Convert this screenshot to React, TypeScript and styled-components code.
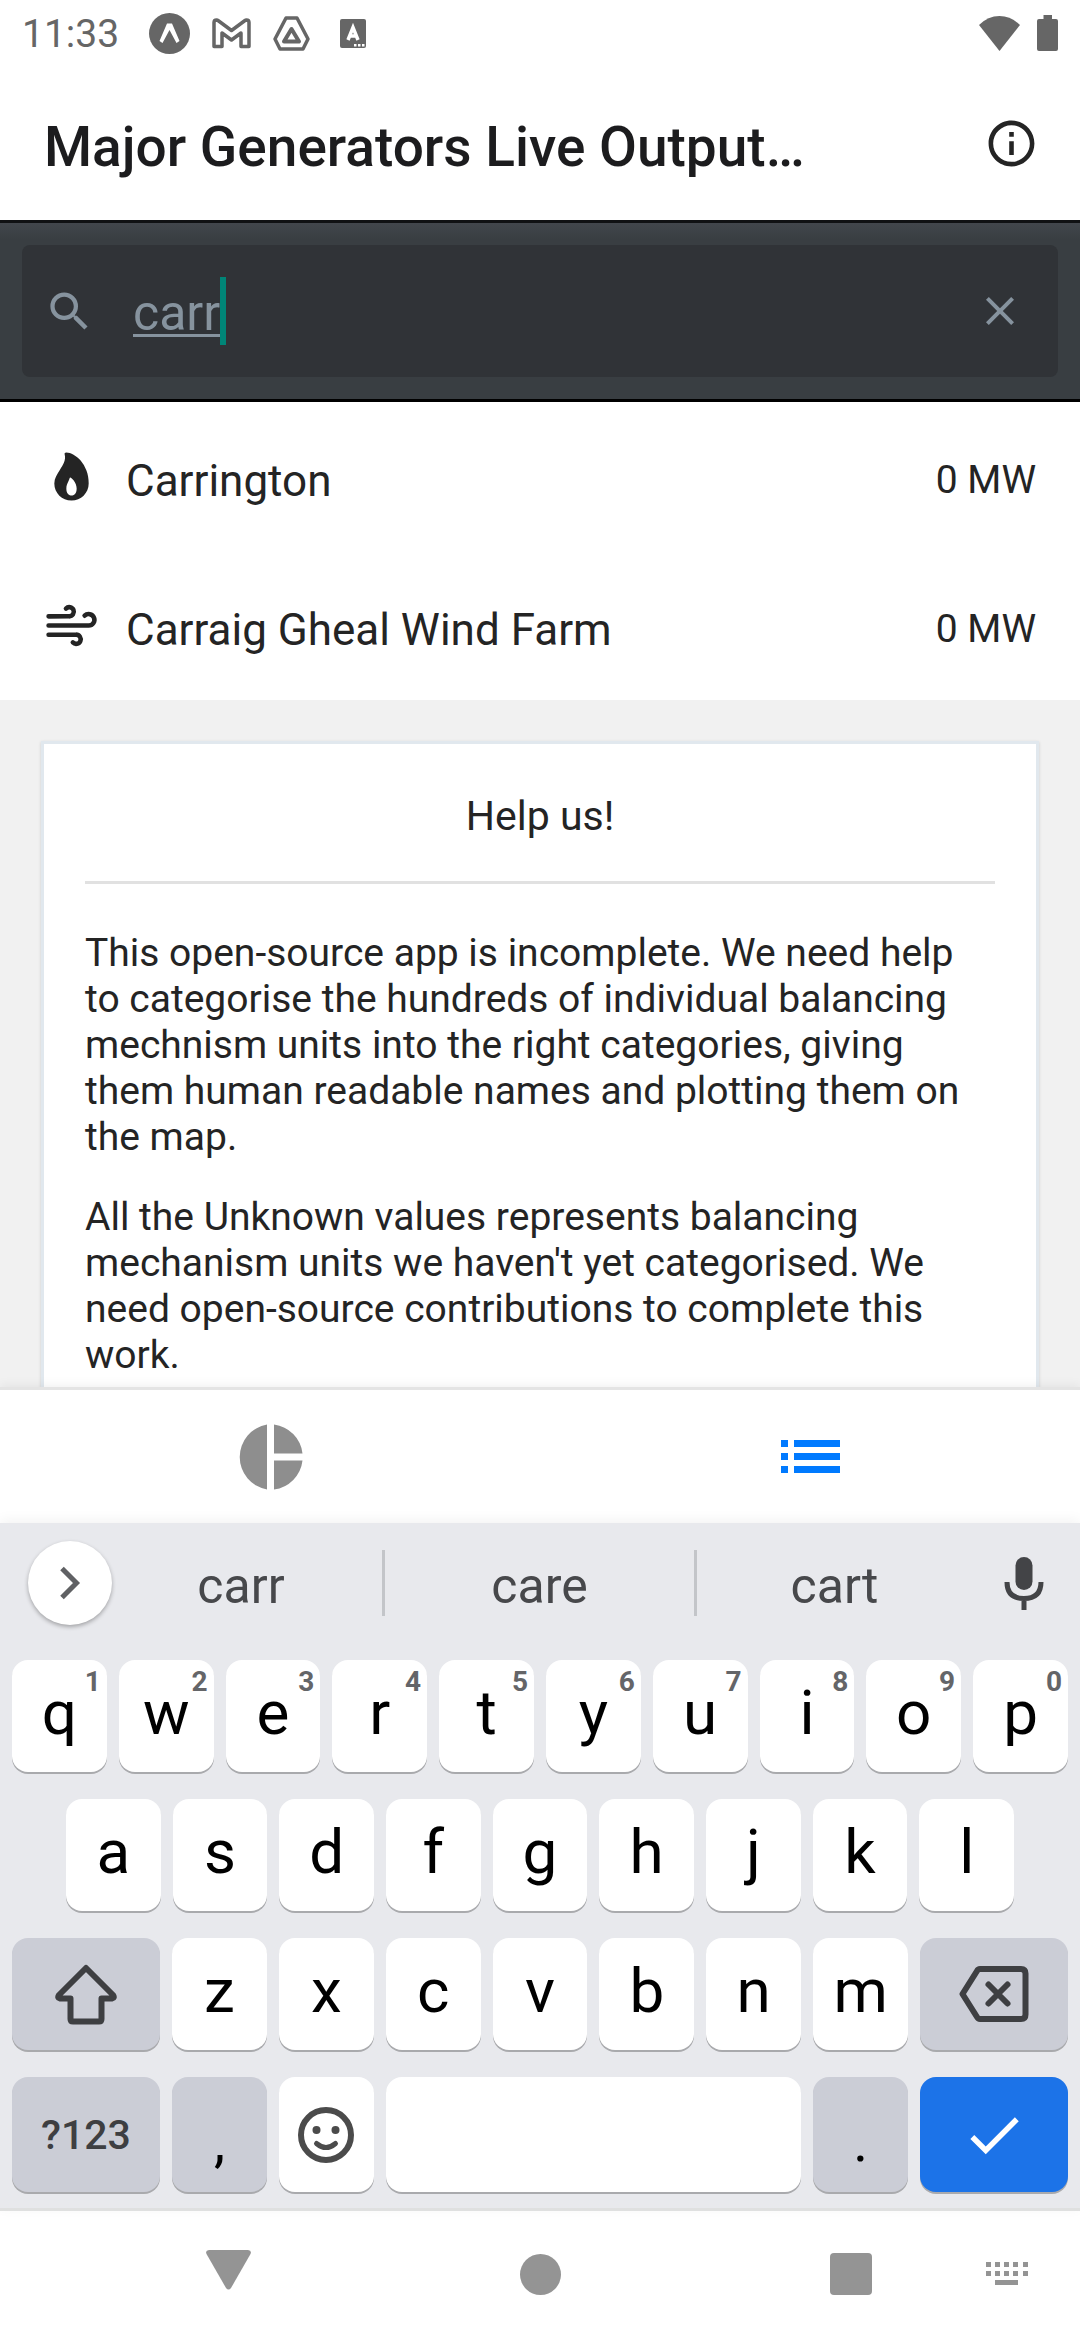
import React, { useState } from 'react';
import styled, { createGlobalStyle } from 'styled-components';
import { FiWind } from 'react-icons/fi';
import { IoFlame } from 'react-icons/io5';
import { MdInfoOutline, MdSearch, MdClose, MdCheck } from 'react-icons/md';

const GlobalStyle = createGlobalStyle`
  * { box-sizing: border-box; }
  body { margin: 0; background: #fff; }
  body, button, input { font-family: Roboto, "Noto Sans", sans-serif; }
  button { margin: 0; padding: 0; border: 0; background: none; color: inherit; }
  h1, h2, p, ul { margin: 0; padding: 0; font-weight: 400; }
  svg { display: block; flex: none; }
`;

const Screen = styled.div`
  display: flex;
  flex-direction: column;
  height: 100vh;
  overflow: hidden;
  color: #242424;
`;

const StatusBar = styled.div`
  display: flex;
  align-items: center;
  justify-content: space-between;
  flex: none;
  height: 66px;
  padding: 0 22px;
  color: #666;
`;

const StatusGroup = styled.div<{ $gap: number }>`
  display: flex;
  align-items: center;
  gap: ${(p) => p.$gap}px;
`;

const Clock = styled.span`
  margin-right: 8px;
  padding-top: 2px;
  font-size: 39px;
  line-height: 46px;
`;

const Header = styled.header`
  display: flex;
  align-items: center;
  justify-content: space-between;
  flex: none;
  height: 154px;
  padding: 0 41px 0 44px;
`;

const Title = styled.h1`
  padding-top: 8px;
  white-space: nowrap;
  font-size: 55px;
  line-height: 64px;
  font-weight: 500;
  color: #1c1c1e;
`;

const SearchBar = styled.div`
  flex: none;
  padding: 22px;
  border-top: 3px solid #101113;
  border-bottom: 3px solid #000;
  background: linear-gradient(#42464c, #393e42 16px);
`;

const SearchField = styled.label`
  display: flex;
  align-items: center;
  height: 132px;
  padding: 0 34px 0 22px;
  border-radius: 8px;
  background: #303337;
  color: #86939e;
`;

const SearchInput = styled.input`
  field-sizing: content;
  margin-left: 38px;
  padding: 4px 0 0;
  border: 0;
  outline: 0;
  background: transparent;
  color: #86939e;
  font-size: 50px;
  line-height: 68px;
  text-decoration: underline;
  text-decoration-thickness: 3px;
  text-underline-offset: 4px;
`;

const Caret = styled.span`
  width: 6px;
  height: 68px;
  background: #008577;
`;

const ClearButton = styled.button`
  margin-left: auto;
`;

const Results = styled.ul`
  flex: none;
  list-style: none;
`;

const ResultRow = styled.li`
  display: flex;
  align-items: center;
  height: 149px;
  padding: 0 44px;
`;

const ResultName = styled.span`
  flex: 1;
  padding: 8px 0 0 27px;
  font-size: 44px;
  line-height: 52px;
`;

const ResultValue = styled.span`
  padding-top: 6px;
  font-size: 39px;
  line-height: 46px;
`;

const Content = styled.main`
  flex: 1;
  min-height: 0;
  overflow: hidden;
  padding: 41px 41px 0;
  background: #f1f1f1;
`;

const Card = styled.section`
  min-height: 100%;
  padding: 41px;
  border: 3px solid #e1e8ee;
  background: #fff;
  box-shadow: 0 1px 3px rgba(0, 0, 0, 0.15);
`;

const CardTitle = styled.h2`
  padding: 8px 0 42px;
  border-bottom: 3px solid #e1e1e1;
  margin-bottom: 46px;
  text-align: center;
  font-size: 41px;
  line-height: 46px;
`;

const Paragraph = styled.p`
  margin-bottom: 34px;
  font-size: 39px;
  line-height: 46px;
`;

const TabBar = styled.nav`
  position: relative;
  display: grid;
  grid-template-columns: 1fr 1fr;
  flex: none;
  height: 136px;
  border-top: 3px solid #e4e4e4;
  background: #fff;
  box-shadow: 0 -2px 10px rgba(0, 0, 0, 0.06);
`;

const Tab = styled.button<{ $active?: boolean }>`
  display: flex;
  align-items: center;
  justify-content: center;
  color: ${(p) => (p.$active ? '#007aff' : '#8e8e8e')};
`;

const Keyboard = styled.div`
  position: relative;
  flex: none;
  padding-bottom: 16px;
  border-bottom: 3px solid #dfe0e0;
  background: #e8e9ed;
  box-shadow: 0 -3px 12px rgba(0, 0, 0, 0.05);
`;

const Suggestions = styled.div`
  display: grid;
  grid-template-columns: 72px 282fr 312fr 278fr 72px;
  align-items: center;
  height: 120px;
  margin-bottom: 17px;
  padding: 0 36px 0 28px;
`;

const ExpandButton = styled.button`
  display: flex;
  align-items: center;
  justify-content: center;
  width: 84px;
  height: 84px;
  border-radius: 50%;
  background: #fff;
  color: #606164;
  box-shadow: 0 2px 4px rgba(0, 0, 0, 0.3);
`;

const Suggestion = styled.button`
  height: 66px;
  padding-top: 5px;
  font-size: 50px;
  line-height: 58px;
  color: #47484b;

  & + & {
    border-left: 3px solid #c3c5c9;
  }
`;

const MicButton = styled.button`
  display: flex;
  justify-content: flex-end;
  color: #434447;
`;

const KeyRows = styled.div`
  display: flex;
  flex-direction: column;
  gap: 27px;
`;

const KeyRow = styled.div<{ $inset?: boolean }>`
  display: flex;
  gap: 12px;
  padding: 0 ${(p) => (p.$inset ? 66 : 12)}px;
`;

const tones = {
  light: ['#fff', '#000'],
  grey: ['#cbcdd6', '#3e3f42'],
  blue: ['#1c73e8', '#fff'],
};

const Key = styled.button<{
  $tone?: keyof typeof tones;
  $wide?: boolean;
  $space?: boolean;
  $tall?: boolean;
}>`
  position: relative;
  display: flex;
  align-items: center;
  justify-content: center;
  flex: ${(p) => (p.$wide ? '0 0 148px' : p.$space ? '416 1 0' : '95 1 0')};
  height: ${(p) => (p.$tall ? 115 : 112)}px;
  border-radius: 16px;
  background: ${(p) => tones[p.$tone ?? 'light'][0]};
  color: ${(p) => tones[p.$tone ?? 'light'][1]};
  box-shadow: 0 2px 0 #a9aaad;
`;

const Letter = styled.span`
  padding-bottom: 6px;
  font-size: 62px;
  line-height: 72px;
`;

const Punctuation = styled.span`
  padding-top: 14px;
  font-size: 56px;
  line-height: 66px;
  color: #000;
`;

const KeyLabel = styled.span`
  font-size: 41px;
  line-height: 48px;
  font-weight: 500;
`;

const Hint = styled.span`
  position: absolute;
  top: 6px;
  right: 6px;
  font-size: 28px;
  line-height: 32px;
  font-weight: 700;
  color: #646568;
`;

const SystemNav = styled.nav`
  display: grid;
  grid-template-columns: 145fr 167fr 456fr 166fr 146fr;
  align-items: center;
  flex: none;
  height: 129px;
  padding-bottom: 3px;
  color: #949494;
  background: #fff;
`;

const NavButton = styled.button<{ $first?: boolean }>`
  display: flex;
  justify-content: center;
  grid-column: ${(p) => (p.$first ? 2 : 'auto')};
`;

const ExpoIcon = () => (
  <svg width="41" height="41" viewBox="0 0 41 41">
    <circle cx="20.5" cy="20.5" r="20.5" fill="currentColor" />
    <path d="M18 10.500h5l7.500 17.500-3 2-7-13-7 13-3-2z" fill="#fff" />
  </svg>
);

const MailIcon = () => (
  <svg width="39" height="31" viewBox="0 0 39 31" fill="none" stroke="currentColor" strokeWidth="3.5" strokeLinejoin="round">
    <path d="M2 28.500V4.500Q2 2 4.500 2L6 2.500 19.500 12.500 33 2.500 34.500 2Q37 2 37 4.500V28.500H29V15L19.500 22 10 15V28.500Z" />
  </svg>
);

const DriveIcon = () => (
  <svg width="37" height="35" viewBox="0 0 37 35" fill="none" stroke="currentColor" strokeWidth="3.5" strokeLinejoin="round">
    <path d="M13 2H24L35 23 30 33H7L2 23Z" />
    <path d="M18.500 13L26 25.500H11Z" strokeWidth="4" />
  </svg>
);

const LetterIcon = () => (
  <svg width="34" height="29" viewBox="-8 0 34 29">
    <rect width="26" height="29" rx="2" fill="currentColor" />
    <path d="M8 21L13 8.500 18 21M9.500 17H16.500" fill="none" stroke="#fff" strokeWidth="3.5" />
    <path d="M14 25h2.500v2.500H14zM18 25h2.500v2.500H18zM22 25h2.500v2.500H22z" fill="#fff" />
  </svg>
);

const WifiIcon = () => (
  <svg width="41" height="35" viewBox="0 0 41 35" fill="currentColor">
    <path d="M0 9Q9 0 20.500 0T41 9L20.500 35Z" />
  </svg>
);

const BatteryIcon = () => (
  <svg width="21" height="36" viewBox="0 0 21 36" fill="currentColor">
    <path d="M6.500 0h8.500v4h4q2 0 2 2v28q0 2-2 2H2q-2 0-2-2V6q0-2 2-2h4.500z" />
  </svg>
);

const PieIcon = () => (
  <svg width="65" height="66" viewBox="0 0 65 66" fill="currentColor">
    <path d="M29 0.500A33 33 0 0 0 29 65.500ZM36 0.500V29.500H64.500A33 33 0 0 0 36 0.500ZM36 36.500V65.500A33 33 0 0 0 64.500 36.500Z" />
  </svg>
);

const ListIcon = () => (
  <svg width="59" height="33" viewBox="0 0 59 33" fill="currentColor">
    <path d="M0 0h7v7H0zM13 0h46v7H13zM0 13h7v7H0zM13 13h46v7H13zM0 26h7v7H0zM13 26h46v7H13z" />
  </svg>
);

const ChevronIcon = () => (
  <svg width="22" height="34" viewBox="0 0 22 34" fill="none" stroke="currentColor" strokeWidth="5">
    <path d="M3 2.500L17.500 17 3 31.500" />
  </svg>
);

const MicIcon = () => (
  <svg width="40" height="53" viewBox="0 0 40 53">
    <rect x="11.500" width="17" height="33" rx="8.500" fill="currentColor" />
    <path d="M3 25Q3 41.500 20 41.500T37 25M20 41V53" fill="none" stroke="currentColor" strokeWidth="5" />
  </svg>
);

const ShiftIcon = () => (
  <svg width="62" height="62" viewBox="0 0 62 62" fill="none" stroke="currentColor" strokeWidth="6" strokeLinejoin="round">
    <path d="M31 5L58 32Q60 35 57 35.500H46.500V56Q46.500 58.500 44 58.500H18Q15.500 58.500 15.500 56V35.500H5Q2 35 4 32Z" />
  </svg>
);

const BackspaceIcon = () => (
  <svg width="70" height="56" viewBox="0 0 70 56" fill="none" stroke="currentColor" strokeWidth="6" strokeLinejoin="round" strokeLinecap="round">
    <path d="M21 3H62Q66.500 3 66.500 7.500V48.500Q66.500 53 62 53H21Q19 53 18 51L3.500 28 18 5Q19 3 21 3Z" />
    <path d="M29.500 18.500L48.500 37.500M48.500 18.500L29.500 37.500" />
  </svg>
);

const SmileIcon = () => (
  <svg width="56" height="56" viewBox="0 0 56 56" fill="none" stroke="#4b4b4b" strokeWidth="6">
    <circle cx="28" cy="28" r="25" />
    <circle cx="18.500" cy="23" r="4" fill="#4b4b4b" stroke="none" />
    <circle cx="37.500" cy="23" r="4" fill="#4b4b4b" stroke="none" />
    <path d="M18.500 36.500Q28 44.500 37.500 36.500" strokeWidth="5" strokeLinecap="round" />
  </svg>
);

const BackIcon = () => (
  <svg width="45" height="48" viewBox="0 0 45 48" fill="currentColor">
    <path d="M3 0H42Q46 0.500 44.500 4L25 38Q22.500 41 20 38L0.500 4Q-1 0.500 3 0Z" />
  </svg>
);

const HomeIcon = () => (
  <svg width="41" height="41" viewBox="0 0 41 41" fill="currentColor">
    <circle cx="20.500" cy="20.500" r="20.500" />
  </svg>
);

const RecentsIcon = () => (
  <svg width="42" height="42" viewBox="0 0 42 42" fill="currentColor">
    <rect width="42" height="42" rx="4" />
  </svg>
);

const KeyboardIcon = () => (
  <svg width="42" height="24" viewBox="0 0 42 24" fill="currentColor">
    {[0, 9, 18, 27, 37].map((x) => (
      <path key={x} d={`M${x} 0h5v5h-5zM${x} 9h5v5h-5z`} />
    ))}
    <rect x="9" y="18" width="23" height="5" />
  </svg>
);

const plants = [
  { name: 'Carrington', output: '0 MW', Icon: IoFlame },
  { name: 'Carraig Gheal Wind Farm', output: '0 MW', Icon: FiWind },
];

export default function App() {
  const [query, setQuery] = useState('carr');

  return (
    <Screen>
      <GlobalStyle />
      <StatusBar>
        <StatusGroup $gap={22}>
          <Clock>11:33</Clock>
          <ExpoIcon />
          <MailIcon />
          <DriveIcon />
          <LetterIcon />
        </StatusGroup>
        <StatusGroup $gap={17}>
          <WifiIcon />
          <BatteryIcon />
        </StatusGroup>
      </StatusBar>

      <Header>
        <Title>Major Generators Live Output…</Title>
        <button type="button" aria-label="About">
          <MdInfoOutline size={55} />
        </button>
      </Header>

      <SearchBar>
        <SearchField>
          <MdSearch size={51} />
          <SearchInput
            aria-label="Search generators"
            value={query}
            onChange={(e) => setQuery(e.target.value)}
          />
          <Caret />
          <ClearButton type="button" aria-label="Clear" onClick={() => setQuery('')}>
            <MdClose size={48} />
          </ClearButton>
        </SearchField>
      </SearchBar>

      <Results>
        {plants.map(({ name, output, Icon }) => (
          <ResultRow key={name}>
            <Icon size={55} />
            <ResultName>{name}</ResultName>
            <ResultValue>{output}</ResultValue>
          </ResultRow>
        ))}
      </Results>

      <Content>
        <Card>
          <CardTitle>Help us!</CardTitle>
          <Paragraph>
            This open-source app is incomplete. We need help to categorise the hundreds of
            individual balancing mechnism units into the right categories, giving them human
            readable names and plotting them on the map.
          </Paragraph>
          <Paragraph>
            All the Unknown values represents balancing mechanism units we haven't yet
            categorised. We need open-source contributions to complete this work.
          </Paragraph>
        </Card>
      </Content>

      <TabBar>
        <Tab type="button" aria-label="Chart">
          <PieIcon />
        </Tab>
        <Tab type="button" aria-label="List" $active>
          <ListIcon />
        </Tab>
      </TabBar>

      <Keyboard>
        <Suggestions>
          <ExpandButton type="button" aria-label="More">
            <ChevronIcon />
          </ExpandButton>
          <Suggestion type="button">carr</Suggestion>
          <Suggestion type="button">care</Suggestion>
          <Suggestion type="button">cart</Suggestion>
          <MicButton type="button" aria-label="Voice input">
            <MicIcon />
          </MicButton>
        </Suggestions>

        <KeyRows>
          <KeyRow>
            {'qwertyuiop'.split('').map((letter, i) => (
              <Key type="button" key={letter}>
                <Letter>{letter}</Letter>
                <Hint>{(i + 1) % 10}</Hint>
              </Key>
            ))}
          </KeyRow>
          <KeyRow $inset>
            {'asdfghjkl'.split('').map((letter) => (
              <Key type="button" key={letter}>
                <Letter>{letter}</Letter>
              </Key>
            ))}
          </KeyRow>
          <KeyRow>
            <Key type="button" aria-label="Shift" $tone="grey" $wide>
              <ShiftIcon />
            </Key>
            {'zxcvbnm'.split('').map((letter) => (
              <Key type="button" key={letter}>
                <Letter>{letter}</Letter>
              </Key>
            ))}
            <Key type="button" aria-label="Backspace" $tone="grey" $wide>
              <BackspaceIcon />
            </Key>
          </KeyRow>
          <KeyRow>
            <Key type="button" $tone="grey" $wide $tall>
              <KeyLabel>?123</KeyLabel>
            </Key>
            <Key type="button" $tone="grey" $tall>
              <Punctuation>,</Punctuation>
            </Key>
            <Key type="button" aria-label="Emoji" $tall>
              <SmileIcon />
            </Key>
            <Key type="button" aria-label="Space" $space $tall />
            <Key type="button" $tone="grey" $tall>
              <Punctuation>.</Punctuation>
            </Key>
            <Key type="button" aria-label="Done" $tone="blue" $wide $tall>
              <MdCheck size={66} />
            </Key>
          </KeyRow>
        </KeyRows>
      </Keyboard>

      <SystemNav>
        <NavButton type="button" aria-label="Back" $first>
          <BackIcon />
        </NavButton>
        <NavButton type="button" aria-label="Home">
          <HomeIcon />
        </NavButton>
        <NavButton type="button" aria-label="Recents">
          <RecentsIcon />
        </NavButton>
        <NavButton type="button" aria-label="Switch keyboard">
          <KeyboardIcon />
        </NavButton>
      </SystemNav>
    </Screen>
  );
}
